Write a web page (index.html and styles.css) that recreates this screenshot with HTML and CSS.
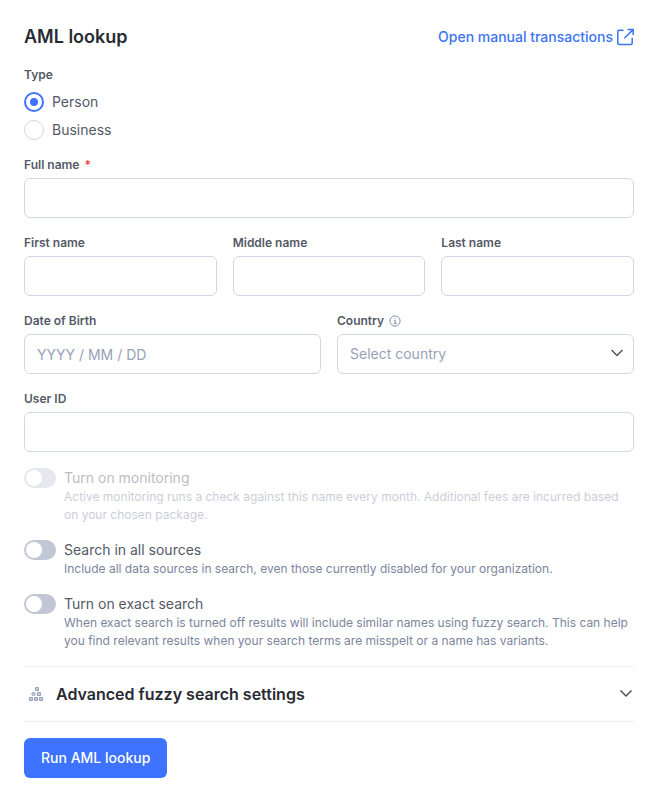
FILE: index.html
```html
<!DOCTYPE html>
<html lang="en">
<head>
<meta charset="utf-8">
<meta name="viewport" content="width=device-width, initial-scale=1">
<title>AML lookup</title>
<link rel="stylesheet" href="styles.css">
</head>
<body>
<main class="panel">
  <header class="header">
    <h1 class="title">AML lookup</h1>
    <a class="link" href="#transactions">Open manual transactions
      <svg class="link-icon" viewBox="0 0 17 18" width="17" height="18" fill="none" stroke="currentColor" stroke-width="1.5" aria-hidden="true"><path d="M6.5 2.2H2Q.8 2.2 .8 3.4V15.2Q.8 16.4 2 16.4H14Q15.2 16.4 15.2 15.2V10M10.6 1.4H16.2V7M16 1.6L7.4 10.2"/></svg>
    </a>
  </header>
  <form class="form">
    <fieldset class="types">
      <legend class="label">Type</legend>
      <label class="choice"><input class="radio" type="radio" name="type" checked>Person</label>
      <label class="choice"><input class="radio" type="radio" name="type">Business</label>
    </fieldset>
    <div class="field">
      <label class="label" for="full">Full name <span class="required">*</span></label>
      <input class="control" id="full" type="text">
    </div>
    <div class="row">
      <div class="field">
        <label class="label" for="first">First name</label>
        <input class="control" id="first" type="text">
      </div>
      <div class="field">
        <label class="label" for="middle">Middle name</label>
        <input class="control" id="middle" type="text">
      </div>
      <div class="field">
        <label class="label" for="last">Last name</label>
        <input class="control" id="last" type="text">
      </div>
    </div>
    <div class="row">
      <div class="field">
        <label class="label" for="dob">Date of Birth</label>
        <input class="control" id="dob" type="text" placeholder="YYYY / MM / DD">
      </div>
      <div class="field">
        <label class="label" for="country">Country
          <svg class="info" viewBox="0 0 12 12" width="12" height="12" fill="none" stroke="currentColor" aria-hidden="true"><circle cx="6" cy="6" r="5.1"/><path d="M5 5.4H6.2V8.6M4.6 8.6H7.6M5.5 3.5H6.6"/></svg>
        </label>
        <div class="select-wrap">
          <select class="control select" id="country"><option>Select country</option></select>
          <svg class="chevron" viewBox="0 0 14 8" width="14" height="8" fill="none" stroke="currentColor" stroke-width="1.5" aria-hidden="true"><path d="M1.5 1L7 6.5L12.5 1"/></svg>
        </div>
      </div>
    </div>
    <div class="field">
      <label class="label" for="user">User ID</label>
      <input class="control" id="user" type="text">
    </div>
    <label class="option disabled">
      <input class="switch" type="checkbox" disabled>
      <span class="option-text"><span class="option-name">Turn on monitoring</span><span class="option-note">Active monitoring runs a check against this name every month. Additional fees are incurred based on your chosen package.</span></span>
    </label>
    <label class="option">
      <input class="switch" type="checkbox">
      <span class="option-text"><span class="option-name">Search in all sources</span><span class="option-note">Include all data sources in search, even those currently disabled for your organization.</span></span>
    </label>
    <label class="option">
      <input class="switch" type="checkbox">
      <span class="option-text"><span class="option-name">Turn on exact search</span><span class="option-note">When exact search is turned off results will include similar names using fuzzy search. This can help you find relevant results when your search terms are misspelt or a name has variants.</span></span>
    </label>
    <button class="accordion" type="button" aria-expanded="false">
      <svg class="blocks" viewBox="0 0 24 24" width="24" height="24" fill="#c3cadb" stroke="#98a2ba" aria-hidden="true"><path d="M11.5 5.5h3v3h-3zM13.5 10.5h3v3h-3zM5.5 15.5h3v3h-3zM10.5 15.5h3v3h-3zM15.5 15.5h3v3h-3z"/><circle cx="9.5" cy="12" r="1.6"/></svg>
      <span class="accordion-title">Advanced fuzzy search settings</span>
      <svg viewBox="0 0 14 8" width="14" height="8" fill="none" stroke="#4e5361" stroke-width="1.5" aria-hidden="true"><path d="M1.5 .5L7 6L12.5 .5"/></svg>
    </button>
    <button class="submit" type="submit">Run AML lookup</button>
  </form>
</main>
</body>
</html>
```
FILE: styles.css
```css
* {
  box-sizing: border-box;
}

body {
  margin: 0;
  background: #fff;
  color: #545966;
  font: 14px/20px Inter, "Liberation Sans", sans-serif;
}

.panel {
  padding: 24px;
}

.header {
  display: flex;
  align-items: center;
  justify-content: space-between;
  margin-bottom: 16px;
}

.title {
  margin: 0;
  color: #292b32;
  font-size: 18px;
  font-weight: 600;
  line-height: 26px;
}

.link {
  display: flex;
  align-items: center;
  gap: 4px;
  color: #3d73f5;
  font-weight: 500;
  text-decoration: none;
}

.form {
  display: flex;
  flex-direction: column;
  gap: 16px;
}

.types {
  display: flex;
  flex-direction: column;
  gap: 8px;
  min-width: 0;
  margin: 0;
  padding: 0;
  border: 0;
}

.types .label {
  padding: 0;
  margin-bottom: 8px;
}

.choice {
  display: flex;
  align-items: center;
  gap: 8px;
}

.radio {
  appearance: none;
  display: grid;
  place-items: center;
  width: 20px;
  height: 20px;
  margin: 0;
  border: 1px solid #d5d8e5;
  border-radius: 50%;
  background: #fff;
}

.radio:checked {
  border: 2px solid #3d73ff;
}

.radio:checked::before {
  content: "";
  width: 8px;
  height: 8px;
  border-radius: 50%;
  background: #3d73ff;
}

.field {
  display: flex;
  flex: 1;
  flex-direction: column;
  gap: 4px;
  min-width: 0;
}

.row {
  display: flex;
  gap: 16px;
}

.label {
  display: flex;
  align-items: center;
  gap: 5px;
  font-size: 12px;
  font-weight: 600;
  line-height: 18px;
}

.required {
  color: #e5483f;
}

.info {
  color: #8490aa;
}

.control {
  width: 100%;
  height: 40px;
  padding: 0 12px;
  border: 1px solid #d3d6e4;
  border-radius: 6px;
  background: #fff;
  color: #545966;
  font: inherit;
}

.control::placeholder {
  color: #98a1b7;
  opacity: 1;
}

.select-wrap {
  position: relative;
}

.select {
  display: block;
  appearance: none;
  color: #98a1b7;
}

.chevron {
  position: absolute;
  top: 15px;
  right: 10px;
  color: #4e5361;
  pointer-events: none;
}

.option {
  display: flex;
  align-items: flex-start;
  gap: 8px;
}

.disabled {
  opacity: 0.4;
}

.switch {
  appearance: none;
  display: flex;
  flex: none;
  width: 32px;
  height: 20px;
  margin: 0;
  padding: 2px;
  border-radius: 10px;
  background: #c1c7d4;
}

.switch::before {
  content: "";
  width: 16px;
  height: 16px;
  border-radius: 50%;
  background: #fff;
}

.switch:checked {
  justify-content: flex-end;
  background: #3d73ff;
}

.option-name,
.option-note {
  display: block;
}

.option-note {
  color: #7c859d;
  font-size: 12px;
  line-height: 18px;
}

.accordion {
  display: flex;
  align-items: center;
  gap: 8px;
  padding: 15px 1px 15px 0;
  border: 0;
  border-top: 1px solid #eceef3;
  border-bottom: 1px solid #eceef3;
  background: none;
  color: #292b32;
  font: 600 16px/24px Inter, "Liberation Sans", sans-serif;
  text-align: left;
}

.accordion-title {
  flex: 1;
}

.submit {
  align-self: flex-start;
  height: 40px;
  padding: 0 17px;
  border: 0;
  border-radius: 6px;
  background: #3d73ff;
  color: #fff;
  font: inherit;
  font-weight: 500;
}
```
